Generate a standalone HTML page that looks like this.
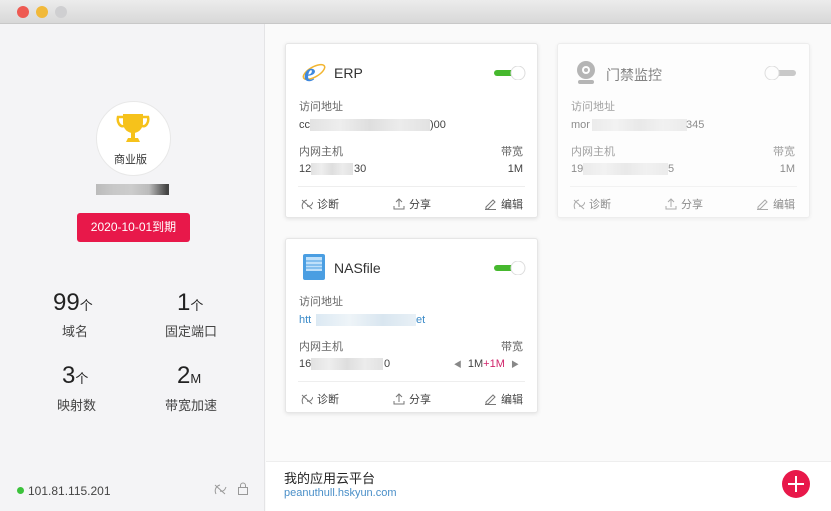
<!DOCTYPE html>
<html><head><meta charset="utf-8"><style>
*{margin:0;padding:0;box-sizing:border-box}
body{width:831px;height:511px;overflow:hidden;font-family:"Liberation Sans","Noto Sans CJK SC",sans-serif;background:#fafafa;position:relative;color:#333}
.a{position:absolute}
.tb{left:0;top:0;width:831px;height:24px;background:linear-gradient(#ececec,#d8d8d8);border-bottom:1px solid #c8c8c8}
.dot{width:12px;height:12px;border-radius:50%;top:6px}
.left{left:0;top:24px;width:265px;height:487px;background:#f4f4f6;border-right:1px solid #e4e4e6}
.card{background:#fff;border:1px solid #e6e6e6;border-radius:3px;box-shadow:0 1px 4px rgba(0,0,0,.1);width:253px;height:175px}
.card .t{left:48px;top:21px;font-size:14px;color:#333}
.lbl{font-size:11px;color:#666}
.val{font-size:11px;color:#444}
.blur{background:linear-gradient(90deg,#e2e2e2,#eee,#dedede,#ececec,#e2e2e2);height:12px}
.hr{left:12px;right:12px;top:142px;border-top:1px solid #eee}
.act{top:152px;font-size:11px;color:#444}
.act svg{vertical-align:-2px;margin-right:4px}
.tg{left:206px;top:22px;width:34px;height:14px}
.n{font-size:24px;color:#222}
.n small{font-size:13px}
.s{font-size:13px;color:#444}
</style></head><body>
<div class="a tb"></div>
<div class="a dot" style="left:17px;background:#ee5a52"></div>
<div class="a dot" style="left:36px;background:#f1b93a"></div>
<div class="a dot" style="left:55px;background:#cfcfd1"></div>
<div class="a left">
 <div class="a" style="left:96px;top:77px;width:75px;height:75px;border-radius:50%;background:#fff;border:1px solid #e8e8e8"></div>
 <svg class="a" style="left:114px;top:87px" width="38" height="36" viewBox="0 0 38 36"><path d="M9 3h20v9a10 10 0 0 1-20 0z" fill="#f6c21b"/><path d="M9 6H4a5 7 0 0 0 6 9M29 6h5a5 7 0 0 1-6 9" fill="none" stroke="#f6c21b" stroke-width="2.5"/><rect x="17" y="21" width="4" height="6" fill="#f6c21b"/><path d="M12 31h14l-2-4H14z" fill="#f6c21b"/></svg>
 <div class="a" style="left:114px;top:127px;font-size:11px;color:#333">商业版</div>
 <div class="a blur" style="left:96px;top:160px;width:73px;height:11px;background:linear-gradient(90deg,#bbb,#c8c8c8,#ccc,#bbb,#444 97%)"></div>
 <div class="a" style="left:77px;top:189px;width:113px;height:29px;background:#e8184a;border-radius:3px;color:#fff;font-size:12px;text-align:center;line-height:29px">2020-10-01到期</div>
 <div class="a n" style="left:53px;top:265px">99<small>个</small></div>
 <div class="a s" style="left:62px;top:297px">域名</div>
 <div class="a n" style="left:177px;top:265px">1<small>个</small></div>
 <div class="a s" style="left:165px;top:297px">固定端口</div>
 <div class="a n" style="left:62px;top:338px">3<small>个</small></div>
 <div class="a s" style="left:57px;top:371px">映射数</div>
 <div class="a n" style="left:177px;top:338px">2<small>M</small></div>
 <div class="a s" style="left:165px;top:371px">带宽加速</div>
 <div class="a" style="left:17px;top:463px;width:7px;height:7px;border-radius:50%;background:#3bc23b"></div>
 <div class="a" style="left:28px;top:460px;font-size:12px;color:#444">101.81.115.201</div>
 <svg class="a" style="left:213px;top:459px" width="14" height="13"><path d="M2 2l10 9M3 11c-2-4 0-8 4-9M7 8c3 1 5-1 6-4" fill="none" stroke="#999"/></svg>
 <svg class="a" style="left:237px;top:458px" width="12" height="14"><rect x="1.5" y="5.5" width="9" height="7" fill="none" stroke="#999"/><path d="M3.5 5.5V3.5a2.5 2.5 0 0 1 5 0v2" fill="none" stroke="#999"/></svg>
</div>

<!-- card ERP -->
<div class="a card" style="left:285px;top:43px">
 <svg class="a" style="left:15px;top:15px" width="26" height="26" viewBox="0 0 26 26"><ellipse cx="13" cy="13" rx="12" ry="5" transform="rotate(-30 13 13)" fill="none" stroke="#f2b530" stroke-width="1.5"/><text x="3" y="22" font-family="Liberation Serif" font-style="italic" font-weight="bold" font-size="26" fill="#3f88dc">e</text></svg>
 <div class="a t">ERP</div>
 <svg class="a tg" viewBox="0 0 34 14"><rect x="2" y="4" width="24" height="6" rx="3" fill="#46b82e"/><circle cx="26" cy="7" r="7" fill="#fff" stroke="#ddd"/></svg>
 <div class="a lbl" style="left:13px;top:54px">访问地址</div>
 <div class="a val" style="left:13px;top:75px">cc</div><div class="a blur" style="left:24px;top:75px;width:120px"></div><div class="a val" style="left:144px;top:75px">)00</div>
 <div class="a lbl" style="left:13px;top:99px">内网主机</div><div class="a lbl" style="right:14px;top:99px">带宽</div>
 <div class="a val" style="left:13px;top:119px">12</div><div class="a blur" style="left:25px;top:119px;width:42px"></div><div class="a val" style="left:68px;top:119px">30</div><div class="a val" style="right:14px;top:119px">1M</div>
 <div class="a hr"></div>
 <div class="a act" style="left:14px"><svg width="13" height="12"><path d="M2 2l10 9M3 11c-2-4 0-8 4-9M7 8c3 1 5-1 6-4" fill="none" stroke="#777"/></svg>诊断</div>
 <div class="a act" style="left:107px"><svg width="12" height="12"><path d="M6 9V1M3 4l3-3 3 3M1 8v3h10V8" fill="none" stroke="#777"/></svg>分享</div>
 <div class="a act" style="right:14px"><svg width="13" height="12"><path d="M2 9l7-7 2 2-7 7H2zM1 11.5h11" fill="none" stroke="#777"/></svg>编辑</div>
</div>
<!-- card 2 -->
<div class="a card" style="left:557px;top:43px;opacity:.6">
 <svg class="a" style="left:17px;top:16px" width="22" height="26"><circle cx="11" cy="10" r="9" fill="#888"/><circle cx="11" cy="10" r="4" fill="#fff"/><circle cx="11" cy="10" r="2" fill="#888"/><rect x="3" y="20" width="16" height="4" rx="2" fill="#888"/></svg>
 <div class="a t">门禁监控</div>
 <svg class="a tg" viewBox="0 0 34 14"><rect x="8" y="4" width="24" height="6" rx="3" fill="#aaa"/><circle cx="8" cy="7" r="7" fill="#fff" stroke="#ccc"/></svg>
 <div class="a lbl" style="left:13px;top:54px">访问地址</div>
 <div class="a val" style="left:13px;top:75px">mor</div><div class="a blur" style="left:34px;top:75px;width:95px"></div><div class="a val" style="left:128px;top:75px">345</div>
 <div class="a lbl" style="left:13px;top:99px">内网主机</div><div class="a lbl" style="right:14px;top:99px">带宽</div>
 <div class="a val" style="left:13px;top:119px">19</div><div class="a blur" style="left:25px;top:119px;width:85px"></div><div class="a val" style="left:110px;top:119px">5</div><div class="a val" style="right:14px;top:119px">1M</div>
 <div class="a hr"></div>
 <div class="a act" style="left:14px"><svg width="13" height="12"><path d="M2 2l10 9M3 11c-2-4 0-8 4-9M7 8c3 1 5-1 6-4" fill="none" stroke="#777"/></svg>诊断</div>
 <div class="a act" style="left:107px"><svg width="12" height="12"><path d="M6 9V1M3 4l3-3 3 3M1 8v3h10V8" fill="none" stroke="#777"/></svg>分享</div>
 <div class="a act" style="right:14px"><svg width="13" height="12"><path d="M2 9l7-7 2 2-7 7H2zM1 11.5h11" fill="none" stroke="#777"/></svg>编辑</div>
</div>
<!-- card NAS -->
<div class="a card" style="left:285px;top:238px">
 <svg class="a" style="left:17px;top:15px" width="22" height="26"><rect width="22" height="26" rx="2" fill="#4a9ee2"/><rect x="3" y="3" width="16" height="14" fill="#bfe0fa"/><path d="M3 7h16M3 11h16M3 14h16" stroke="#4a9ee2"/></svg>
 <div class="a t">NASfile</div>
 <svg class="a tg" viewBox="0 0 34 14"><rect x="2" y="4" width="24" height="6" rx="3" fill="#46b82e"/><circle cx="26" cy="7" r="7" fill="#fff" stroke="#ddd"/></svg>
 <div class="a lbl" style="left:13px;top:54px">访问地址</div>
 <div class="a val" style="left:13px;top:75px;color:#3a8ac8">htt</div><div class="a blur" style="left:30px;top:75px;width:100px;background:linear-gradient(90deg,#dce9f3,#eef4f8,#d9e6f0,#e8f0f6)"></div><div class="a val" style="left:130px;top:75px;color:#3a8ac8">et</div>
 <div class="a lbl" style="left:13px;top:99px">内网主机</div><div class="a lbl" style="right:14px;top:99px">带宽</div>
 <div class="a val" style="left:13px;top:119px">16</div><div class="a blur" style="left:25px;top:119px;width:72px"></div><div class="a val" style="left:98px;top:119px">0</div>
 <div class="a val" style="right:18px;top:119px"><span style="color:#888;font-size:8px">◀</span>&nbsp; 1M<span style="color:#d0246a">+1M</span> &nbsp;<span style="color:#888;font-size:8px">▶</span></div>
 <div class="a hr"></div>
 <div class="a act" style="left:14px"><svg width="13" height="12"><path d="M2 2l10 9M3 11c-2-4 0-8 4-9M7 8c3 1 5-1 6-4" fill="none" stroke="#777"/></svg>诊断</div>
 <div class="a act" style="left:107px"><svg width="12" height="12"><path d="M6 9V1M3 4l3-3 3 3M1 8v3h10V8" fill="none" stroke="#777"/></svg>分享</div>
 <div class="a act" style="right:14px"><svg width="13" height="12"><path d="M2 9l7-7 2 2-7 7H2zM1 11.5h11" fill="none" stroke="#777"/></svg>编辑</div>
</div>
<!-- bottom -->
<div class="a" style="left:266px;top:461px;width:565px;height:50px;background:#fff;border-top:1px solid #eee"></div>
<div class="a" style="left:284px;top:468px;font-size:13px;color:#222">我的应用云平台</div>
<div class="a" style="left:284px;top:487px;font-size:11px;color:#4a8fc8">peanuthull.hskyun.com</div>
<div class="a" style="left:782px;top:470px;width:28px;height:28px;border-radius:50%;background:#e8184a"></div>
<div class="a" style="left:788px;top:483px;width:16px;height:2px;background:#fff"></div>
<div class="a" style="left:795px;top:476px;width:2px;height:16px;background:#fff"></div>
</body></html>
